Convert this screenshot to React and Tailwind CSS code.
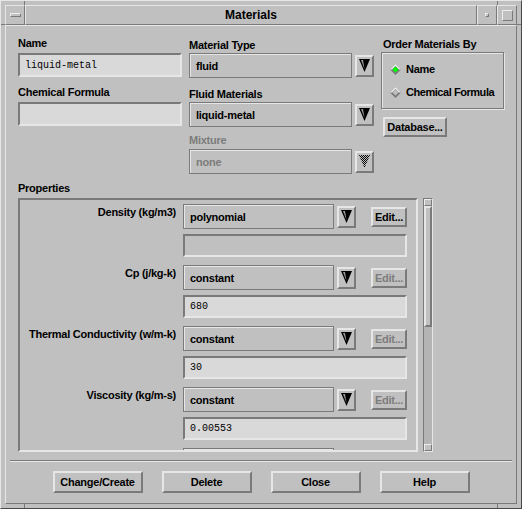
import React from 'react';

const raised = 'border-2 border-t-[#e6e6e6] border-l-[#e6e6e6] border-b-[#7a7a7a] border-r-[#7a7a7a]';
const sunken = 'border-2 border-t-[#7a7a7a] border-l-[#7a7a7a] border-b-[#e6e6e6] border-r-[#e6e6e6]';
const label = 'text-[11px] font-bold leading-[14px] tracking-[-0.25px] whitespace-nowrap';

function ArrowButton({ disabled }) {
  return (
    <div className={`w-[19px] h-[22px] flex items-center justify-center ${raised}`}>
      <svg width="11" height="13" viewBox="0 0 11 13">
        <defs>
          <pattern id="stip" width="2" height="2" patternUnits="userSpaceOnUse">
            <rect width="1" height="1" fill="#000" />
            <rect x="1" y="1" width="1" height="1" fill="#000" />
          </pattern>
        </defs>
        {disabled ? (
          <polygon points="0,0 11,0 5.5,13" fill="url(#stip)" />
        ) : (
          <>
            <polygon points="0,0 11,0 5.5,13" fill="#000" />
            <polygon points="2,1 4,1 5.5,10" fill="#9a9a9a" />
          </>
        )}
      </svg>
    </div>
  );
}

function OptionMenu({ value, w, disabled }) {
  return (
    <div
      className={`h-[25px] flex items-center pl-[6px] border border-[#7a7a7a] shadow-[inset_1px_1px_0_#e6e6e6] ${w} ${label} ${
        disabled ? 'text-[#7c7c7c]' : 'text-black'
      }`}
    >
      {value}
    </div>
  );
}

function OptionRow({ value, w, disabled }) {
  return (
    <div className="flex items-center h-[25px]">
      <OptionMenu value={value} w={w} disabled={disabled} />
      <div className="ml-[3px]">
        <ArrowButton disabled={disabled} />
      </div>
    </div>
  );
}

function TextField({ value, w, h, disabled }) {
  return (
    <div
      className={`${w} ${h} ${sunken} flex items-center pl-[5px] font-['Liberation_Mono',monospace] text-[10px] text-black ${
        disabled ? 'bg-[#c0c0c0]' : 'bg-[#d9d9d9]'
      }`}
    >
      {value}
    </div>
  );
}

function Diamond({ on }) {
  return (
    <svg width="11" height="11" viewBox="0 0 11 11">
      <polygon points="5.5,0 11,5.5 5.5,11 0,5.5" fill="#7a7a7a" />
      <polygon points="5.5,0 11,5.5 9,5.5 5.5,2 2,5.5 0,5.5" fill="#eeeeee" />
      <polygon points="5.5,2.5 8.5,5.5 5.5,8.5 2.5,5.5" fill={on ? '#00ff00' : '#c0c0c0'} />
    </svg>
  );
}

function Button({ children, w, disabled }) {
  return (
    <div
      className={`${w} ${raised} flex items-center justify-center ${label} ${
        disabled ? 'text-[#7c7c7c]' : 'text-black'
      }`}
    >
      {children}
    </div>
  );
}

const props = [
  { name: 'Density (kg/m3)', method: 'polynomial', value: '', editable: true, edit: 'Edit...' },
  { name: 'Cp (j/kg-k)', method: 'constant', value: '680', edit: 'Edit...' },
  { name: 'Thermal Conductivity (w/m-k)', method: 'constant', value: '30', edit: 'Edit...' },
  { name: 'Viscosity (kg/m-s)', method: 'constant', value: '0.00553', edit: 'Edit...' },
  // next row, only its top edge shows
  { name: '', method: '', value: '', edit: '' },
];

export default function App() {
  return (
    <div className="w-[522px] h-[509px] bg-[#c0c0c0] font-['Liberation_Sans',Arial,sans-serif] text-black border border-t-[#e6e6e6] border-l-[#e6e6e6] border-b-[#4a4a4a] border-r-[#4a4a4a] p-[4px] flex flex-col relative">
      {/* frame corner marks */}
      <div className="absolute left-[23px] top-0 w-px h-[4px] bg-[#7a7a7a]" />
      <div className="absolute right-[23px] top-0 w-px h-[4px] bg-[#7a7a7a]" />
      <div className="absolute left-0 top-[23px] w-[4px] h-px bg-[#7a7a7a]" />
      <div className="absolute right-0 top-[23px] w-[4px] h-px bg-[#7a7a7a]" />
      <div className="absolute left-[23px] bottom-0 w-px h-[4px] bg-[#7a7a7a]" />
      <div className="absolute right-[23px] bottom-0 w-px h-[4px] bg-[#7a7a7a]" />

      {/* Title bar */}
      <div className="h-[20px] flex">
        <div className="w-[20px] flex items-center justify-center border border-t-[#e6e6e6] border-l-[#e6e6e6] border-b-[#7a7a7a] border-r-[#7a7a7a]">
          <div className="w-[11px] h-[4px] border border-t-[#eeeeee] border-l-[#eeeeee] border-b-[#7a7a7a] border-r-[#7a7a7a]" />
        </div>
        <div className="flex-1 flex items-center justify-center text-[12px] font-bold border border-t-[#e6e6e6] border-l-[#e6e6e6] border-b-[#7a7a7a] border-r-[#7a7a7a]">
          Materials
        </div>
        <div className="w-[20px] flex items-center justify-center border border-t-[#e6e6e6] border-l-[#e6e6e6] border-b-[#7a7a7a] border-r-[#7a7a7a]">
          <div className="w-[4px] h-[4px] border border-t-[#eeeeee] border-l-[#eeeeee] border-b-[#7a7a7a] border-r-[#7a7a7a]" />
        </div>
        <div className="w-[20px] flex items-center justify-center border border-t-[#e6e6e6] border-l-[#e6e6e6] border-b-[#7a7a7a] border-r-[#7a7a7a]">
          <div className="w-[11px] h-[11px] border border-t-[#eeeeee] border-l-[#eeeeee] border-b-[#7a7a7a] border-r-[#7a7a7a]" />
        </div>
      </div>

      {/* Content */}
      <div className="flex-1 flex flex-col border border-t-[#e6e6e6] border-l-[#e6e6e6] border-b-[#7a7a7a] border-r-[#7a7a7a]">
        <div className="px-[12px]">
          <div className="flex pt-[10px]">
            {/* left column */}
            <div className="w-[164px] flex flex-col">
              <div className={label}>Name</div>
              <div className="mt-[3px]">
                <TextField value="liquid-metal" w="w-[164px]" h="h-[24px]" />
              </div>
              <div className={`${label} mt-[8px]`}>Chemical Formula</div>
              <div className="mt-[3px]">
                <TextField value="" w="w-[164px]" h="h-[24px]" />
              </div>
            </div>

            {/* middle column */}
            <div className="ml-[7px] w-[185px] flex flex-col pt-[2px]">
              <div className={label}>Material Type</div>
              <div className="mt-[1px]">
                <OptionRow value="fluid" w="w-[163px]" />
              </div>
              <div className={`${label} mt-[9px]`}>Fluid Materials</div>
              <div className="mt-[1px]">
                <OptionRow value="liquid-metal" w="w-[163px]" />
              </div>
              <div className={`${label} mt-[6px] text-[#7c7c7c]`}>Mixture</div>
              <div className="mt-[2px]">
                <OptionRow value="none" w="w-[163px]" disabled />
              </div>
            </div>

            {/* right column */}
            <div className="ml-[7px] w-[124px] flex flex-col pt-[1px]">
              <div className={`${label} pl-[2px]`}>Order Materials By</div>
              <div className="mt-[1px] h-[57px] border border-[#7a7a7a] shadow-[inset_1px_1px_0_#e6e6e6,1px_1px_0_#e6e6e6] pt-[9px] pl-[8px] flex flex-col">
                <div className="flex items-center h-[14px]">
                  <Diamond on />
                  <span className={`${label} ml-[5px]`}>Name</span>
                </div>
                <div className="flex items-center h-[14px] mt-[9px]">
                  <Diamond />
                  <span className={`${label} ml-[5px] tracking-[-0.45px]`}>Chemical Formula</span>
                </div>
              </div>
              <div className="mt-[8px] ml-[2px]">
                <Button w="w-[64px] h-[20px]">Database...</Button>
              </div>
            </div>
          </div>

          <div className={`${label} mt-[7px]`}>Properties</div>

          <div className="flex mt-[3px]">
            <div className={`w-[400px] h-[254px] ${sunken} overflow-hidden pt-[4px]`}>
              {props.map((p, i) => (
                <div key={i} className="flex flex-col mb-[8px]">
                  <div className="flex h-[25px]">
                    <div className={`w-[156px] text-right pt-[1px] ${label}`}>{p.name}</div>
                    <div className="ml-[7px] flex items-center">
                      <OptionMenu value={p.method} w="w-[151px]" />
                      <div className="ml-[3px]">
                        <ArrowButton />
                      </div>
                      <div className="ml-[15px]">
                        <Button w="w-[36px] h-[20px]" disabled={!p.editable}>
                          {p.edit}
                        </Button>
                      </div>
                    </div>
                  </div>
                  <div className="ml-[163px] mt-[5px]">
                    <TextField value={p.value} w="w-[224px]" h="h-[23px]" disabled={p.editable} />
                  </div>
                </div>
              ))}
            </div>

            {/* scrollbar */}
            <div className="ml-[5px] w-[10px] h-[254px] flex flex-col border border-t-[#7a7a7a] border-l-[#7a7a7a] border-b-[#e6e6e6] border-r-[#e6e6e6]">
              <div className="h-[7px] border border-t-[#eeeeee] border-l-[#eeeeee] border-b-[#7a7a7a] border-r-[#7a7a7a]" />
              <div className="h-[121px] border-2 border-t-[#e6e6e6] border-l-[#e6e6e6] border-b-[#7a7a7a] border-r-[#7a7a7a]" />
              <div className="flex-1 bg-[#b4b4b4]" />
              <div className="h-[7px] border border-t-[#eeeeee] border-l-[#eeeeee] border-b-[#7a7a7a] border-r-[#7a7a7a]" />
            </div>
          </div>
        </div>

        {/* separator */}
        <div className="mx-[4px] mt-[8px] h-[2px] border-t border-t-[#7a7a7a] border-b border-b-[#e6e6e6]" />

        <div className="mt-[9px] flex justify-center gap-[19px]">
          <Button w="w-[90px] h-[22px]">Change/Create</Button>
          <Button w="w-[90px] h-[22px]">Delete</Button>
          <Button w="w-[90px] h-[22px]">Close</Button>
          <Button w="w-[90px] h-[22px]">Help</Button>
        </div>
      </div>
    </div>
  );
}
